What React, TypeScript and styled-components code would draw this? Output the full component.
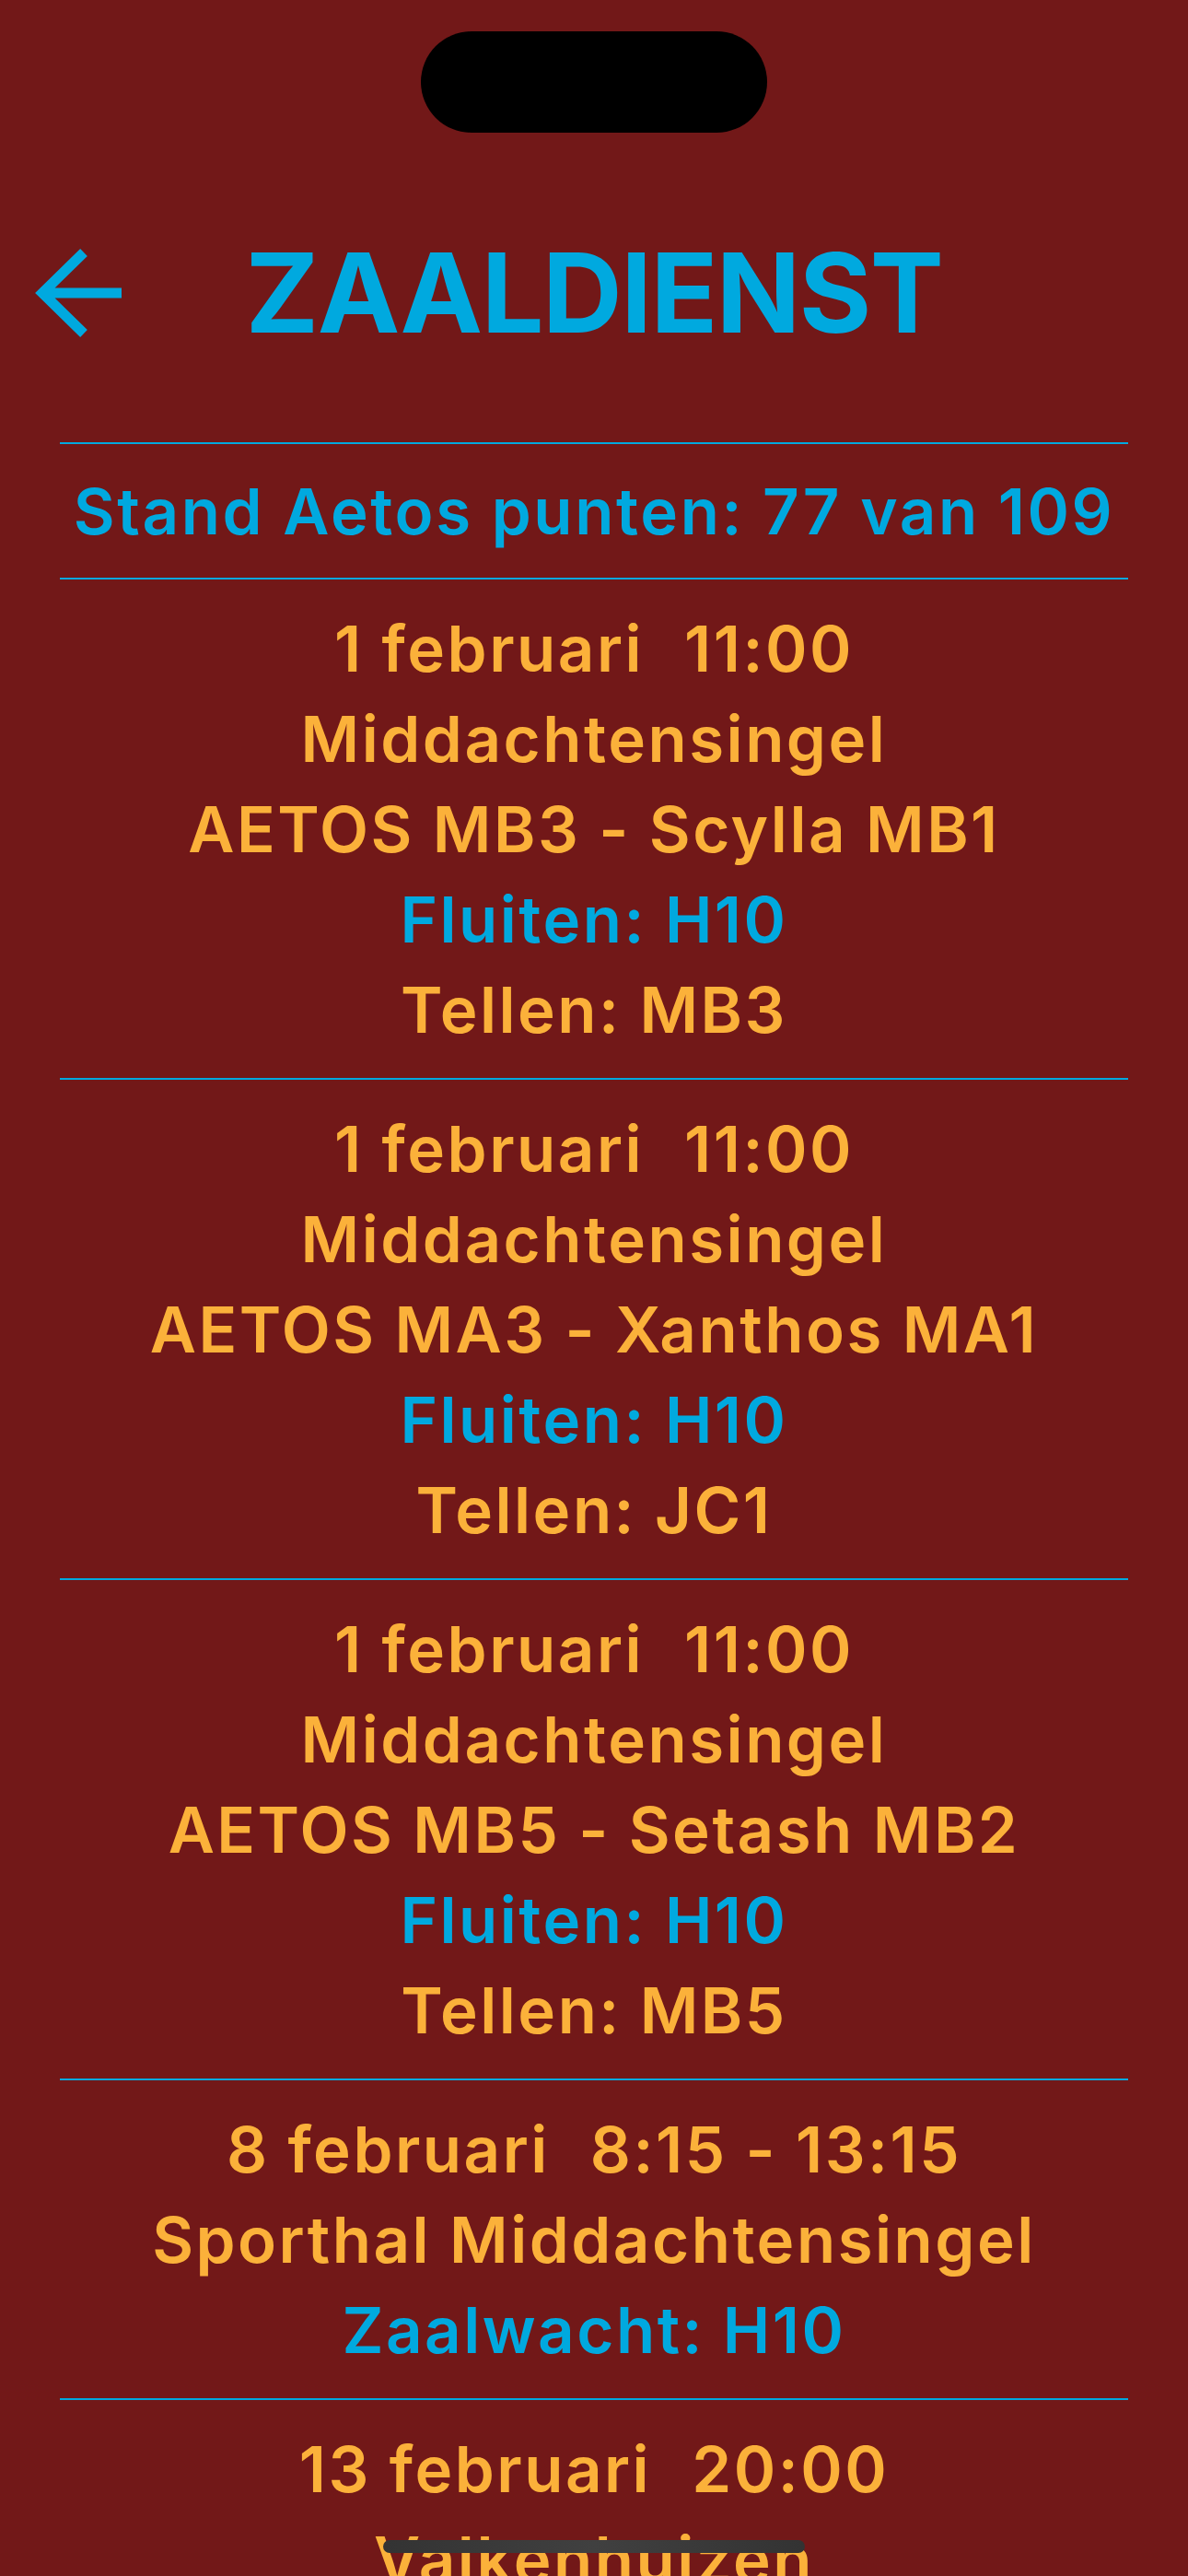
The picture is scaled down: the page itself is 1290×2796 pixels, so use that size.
import React from "react";
import styled, { createGlobalStyle } from "styled-components";

const GlobalStyle = createGlobalStyle`
  html, body { margin: 0; padding: 0; background: #721818; }
  * { box-sizing: border-box; }
`;

const BLUE = "#00a9df";
const ORANGE = "#fbb13a";

const Screen = styled.div`
  position: relative;
  width: 1290px;
  height: 2796px;
  overflow: hidden;
  background: #721818;
  font-family: Inter, "Noto Sans", sans-serif;
`;

const Island = styled.div`
  position: absolute;
  top: 34px;
  left: 457px;
  width: 376px;
  height: 110px;
  border-radius: 55px;
  background: #000;
`;

const Header = styled.header`
  display: grid;
  grid-template-columns: 1fr auto 1fr;
  align-items: center;
  height: 176px;
  margin-top: 230px;
  padding: 0 36px;
`;

const BackButton = styled.button`
  justify-self: start;
  display: flex;
  align-items: center;
  justify-content: center;
  background: none;
  border: none;
  padding: 0;
  cursor: pointer;
`;

const Title = styled.h1`
  margin: 0;
  color: ${BLUE};
  font-family: Inter, "Liberation Sans", sans-serif;
  font-weight: 700;
  font-size: 120px;
  line-height: 1;
  letter-spacing: -1.5px;
`;

const Content = styled.main`
  margin-top: 74px;
  padding: 0 65px;
  display: flex;
  flex-direction: column;
`;

const Divider = styled.hr`
  margin: 0;
  border: none;
  height: 2px;
  background: ${BLUE};
`;

const Stand = styled.div`
  height: 145px;
  display: flex;
  align-items: center;
  justify-content: center;
  color: ${BLUE};
  font-size: 69px;
  font-weight: 600;
  letter-spacing: 2.6px;
  white-space: nowrap;
`;

const Card = styled.section`
  padding: 26px 0 25px;
  display: flex;
  flex-direction: column;
  align-items: center;
`;

const Row = styled.div<{ $accent?: boolean }>`
  display: flex;
  justify-content: center;
  gap: 44px;
  height: 98px;
  line-height: 98px;
  font-size: 69px;
  font-weight: 600;
  letter-spacing: 2.5px;
  white-space: nowrap;
  color: ${(p) => (p.$accent ? BLUE : ORANGE)};
`;

const HomeIndicator = styled.div`
  position: absolute;
  left: 416px;
  bottom: 25px;
  width: 458px;
  height: 14px;
  border-radius: 7px;
  background: linear-gradient(90deg, #333 0%, #404040 50%, #333 100%);
`;

type Item = {
  date: string;
  time: string;
  rows: { text: string; accent?: boolean }[];
};

const items: Item[] = [
  {
    date: "1 februari",
    time: "11:00",
    rows: [
      { text: "Middachtensingel" },
      { text: "AETOS MB3 - Scylla MB1" },
      { text: "Fluiten: H10", accent: true },
      { text: "Tellen: MB3" },
    ],
  },
  {
    date: "1 februari",
    time: "11:00",
    rows: [
      { text: "Middachtensingel" },
      { text: "AETOS MA3 - Xanthos MA1" },
      { text: "Fluiten: H10", accent: true },
      { text: "Tellen: JC1" },
    ],
  },
  {
    date: "1 februari",
    time: "11:00",
    rows: [
      { text: "Middachtensingel" },
      { text: "AETOS MB5 - Setash MB2" },
      { text: "Fluiten: H10", accent: true },
      { text: "Tellen: MB5" },
    ],
  },
  {
    date: "8 februari",
    time: "8:15 - 13:15",
    rows: [
      { text: "Sporthal Middachtensingel" },
      { text: "Zaalwacht: H10", accent: true },
    ],
  },
  {
    date: "13 februari",
    time: "20:00",
    rows: [{ text: "Valkenhuizen" }],
  },
];

const BackArrow = () => (
  <svg width="96" height="100" viewBox="0 0 96 100" fill="none">
    <path
      d="M55 6 L10 50 L55 94 M10 50 H96"
      stroke={BLUE}
      strokeWidth="11"
      strokeLinecap="butt"
      strokeLinejoin="miter"
    />
  </svg>
);

export default function App() {
  return (
    <>
      <GlobalStyle />
      <Screen>
        <Island />
        <Header>
          <BackButton aria-label="Terug">
            <BackArrow />
          </BackButton>
          <Title>ZAALDIENST</Title>
          <div />
        </Header>
        <Content>
          <Divider />
          <Stand>Stand Aetos punten: 77 van 109</Stand>
          <Divider />
          {items.map((item, i) => (
            <React.Fragment key={i}>
              <Card>
                <Row>
                  <span>{item.date}</span>
                  <span>{item.time}</span>
                </Row>
                {item.rows.map((r, j) => (
                  <Row key={j} $accent={r.accent}>
                    {r.text}
                  </Row>
                ))}
              </Card>
              {i < items.length - 1 && <Divider />}
            </React.Fragment>
          ))}
        </Content>
        <HomeIndicator />
      </Screen>
    </>
  );
}
